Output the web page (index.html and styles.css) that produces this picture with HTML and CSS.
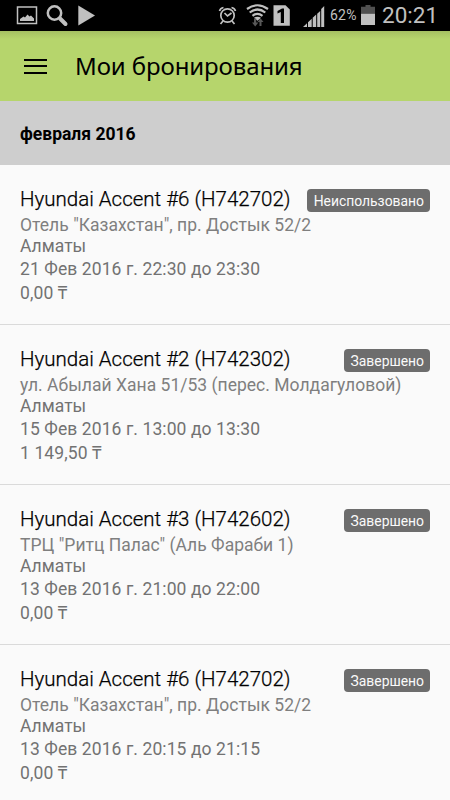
FILE: index.html
```
<!DOCTYPE html>
<html lang="ru">
<head>
	<meta charset="UTF-8">
	<title>Мои бронирования</title>
	<link rel="stylesheet" href="styles.css">
</head>
<body>
	<div class="app">
		<div class="status_bar">
			<svg class="status_left" width="100" height="31" viewBox="0 0 100 31">
				<rect x="17.500" y="7" width="19" height="16.500" fill="none" stroke="#c0c0c0" stroke-width="1.500"/>
				<path d="M20 21v-2l3.500-2.500 1.500 1 2.500-3 2 2 1.500-1 3 3V21z" fill="#c0c0c0"/>
				<circle cx="54.500" cy="13" r="6.700" fill="none" stroke="#c0c0c0" stroke-width="2.500"/>
				<path d="M60 18.500l5.500 5.500" stroke="#c0c0c0" stroke-width="4" stroke-linecap="round"/>
				<path d="M78.300 5.500L95 15.500 78.300 25.500z" fill="#c0c0c0"/>
			</svg>
			<svg class="status_right" width="112" height="31" viewBox="216 0 112 31">
				<g fill="none" stroke="#c0c0c0" stroke-width="1.700">
					<circle cx="227.500" cy="15.500" r="6.700"/>
					<path d="M224.500 13l3 3 4-3M223 21l-2.500 3M232 21l2.500 3M219.500 11a5 5 0 0 1 4-3.500M235.500 11a5 5 0 0 0-4-3.500"/>
				</g>
				<g fill="none" stroke="#c0c0c0" stroke-width="2.200">
					<path d="M247 9q10.500-7.500 21 0M249.700 12.500q7.800-6 15.600 0M252.500 15.800q5-4 10 0"/>
				</g>
				<path d="M254 17.800q3.500-2 7 0l-3.500 3z" fill="#c0c0c0"/>
				<path d="M254 18.500v4h-2l3.200 4 3.200-4h-2.200v-4zM259.500 26v-4h-2l3-3.800 3 3.800h-2v4z" fill="#585858"/>
				<path d="M273.500 5.300h12l4.300 4.200v16.200h-16.300z" fill="#c0c0c0"/>
				<path d="M277.500 11l4.500-2.500h2V23h-3.200V12l-3.300 1.500z" fill="#000"/>
				<path d="M303 27l4-3.700V27zM308 27v-4.700l3.700-3.500V27zM312.700 27v-9.200l3.500-3.200V27zM317.200 27V13.700l3-2.700V27zM321.200 27V9l3-3v21z" fill="#c0c0c0"/>
			</svg>
			<span class="percent">62%</span>
			<svg class="battery" width="14" height="31" viewBox="0 0 14 31">
				<path d="M0 6.700h4.500V5h5v1.700H14v7H0z" fill="#505050"/>
				<path d="M0 13.700h14V25H0z" fill="#c0c0c0"/>
			</svg>
			<span class="clock">20:21</span>
		</div>
		<div class="toolbar">
			<div class="menu"><i></i><i></i><i></i></div>
			<h1 class="title">Мои бронирования</h1>
		</div>
		<div class="month">февраля 2016</div>
		<ul class="list">
			<li class="item">
				<div class="head">
					<span class="car">Hyundai Accent #6 (H742702)</span>
					<span class="tag">Неиспользовано</span>
				</div>
				<p class="address">Отель "Казахстан", пр. Достык 52/2<br><span class="city">Алматы</span></p>
				<p class="date">21 Фев 2016 г. 22:30 до 23:30</p>
				<p class="price">0,00 ₸</p>
			</li>
			<li class="item">
				<div class="head">
					<span class="car">Hyundai Accent #2 (H742302)</span>
					<span class="tag">Завершено</span>
				</div>
				<p class="address">ул. Абылай Хана 51/53 (перес. Молдагуловой)<br><span class="city">Алматы</span></p>
				<p class="date">15 Фев 2016 г. 13:00 до 13:30</p>
				<p class="price">1 149,50 ₸</p>
			</li>
			<li class="item">
				<div class="head">
					<span class="car">Hyundai Accent #3 (H742602)</span>
					<span class="tag">Завершено</span>
				</div>
				<p class="address">ТРЦ "Ритц Палас" (Аль Фараби 1)<br><span class="city">Алматы</span></p>
				<p class="date">13 Фев 2016 г. 21:00 до 22:00</p>
				<p class="price">0,00 ₸</p>
			</li>
			<li class="item">
				<div class="head">
					<span class="car">Hyundai Accent #6 (H742702)</span>
					<span class="tag">Завершено</span>
				</div>
				<p class="address">Отель "Казахстан", пр. Достык 52/2<br><span class="city">Алматы</span></p>
				<p class="date">13 Фев 2016 г. 20:15 до 21:15</p>
				<p class="price">0,00 ₸</p>
			</li>
		</ul>
	</div>
</body>
</html>
```
FILE: styles.css
```
body{
	margin:0;
}
ul,p,h1{
	margin:0;
	padding:0;
	list-style:none;
}
.app{
	width:450px;
	height:800px;
	overflow:hidden;
	background:#fafafa;
	font-family:Roboto,"Noto Sans",sans-serif;
	color:#000;
}
.status_bar{
	height:31px;
	display:flex;
	align-items:center;
	background:#000;
	color:#c0c0c0;
}
.status_right{
	margin-left:116px;
}
.percent{
	width:31px;
	margin-left:2px;
	font-size:14px;
	line-height:33px;
	letter-spacing:.2px;
	white-space:nowrap;
}
.battery{
	flex:none;
}
.clock{
	margin-left:7px;
	font-size:22.5px;
	line-height:31px;
}
.toolbar{
	height:70px;
	display:flex;
	align-items:center;
	background:linear-gradient(#a5c062,#b6d56c 8px);
}
.menu{
	width:23px;
	height:15px;
	margin-left:24px;
	display:flex;
	flex-direction:column;
	justify-content:space-between;
}
.menu i{
	height:2px;
	background:#000;
}
.title{
	margin-left:28px;
	font:400 24px/34px "Noto Sans",sans-serif;
	letter-spacing:-.1px;
}
.month{
	height:64px;
	padding:1px 20px 0;
	box-sizing:border-box;
	background:#cecece;
	font-size:17.5px;
	font-weight:bold;
	line-height:64px;
}
.item{
	height:160px;
	padding:22px 20px 0;
	box-sizing:border-box;
	border-bottom:1px solid #dadada;
	color:#727272;
	font-size:17.5px;
	line-height:21px;
}
.head{
	height:28px;
	display:flex;
	justify-content:space-between;
	align-items:flex-start;
	color:#000;
}
.car{
	font-size:20.5px;
	font-weight:300;
	line-height:25px;
	white-space:nowrap;
	-webkit-text-stroke:.25px #000;
}
.tag{
	height:23px;
	margin-top:2px;
	padding:0 6px 0 7px;
	border-radius:4px;
	background:#6d6d6d;
	color:#fafafa;
	font-size:13.9px;
	line-height:25px;
}
.address{
	color:#7f7f7f;
	letter-spacing:.02px;
	white-space:nowrap;
}
.city{
	color:#727272;
}
.date{
	margin-top:2px;
	letter-spacing:.09px;
}
.price{
	margin-top:3px;
	letter-spacing:.1px;
}
```
